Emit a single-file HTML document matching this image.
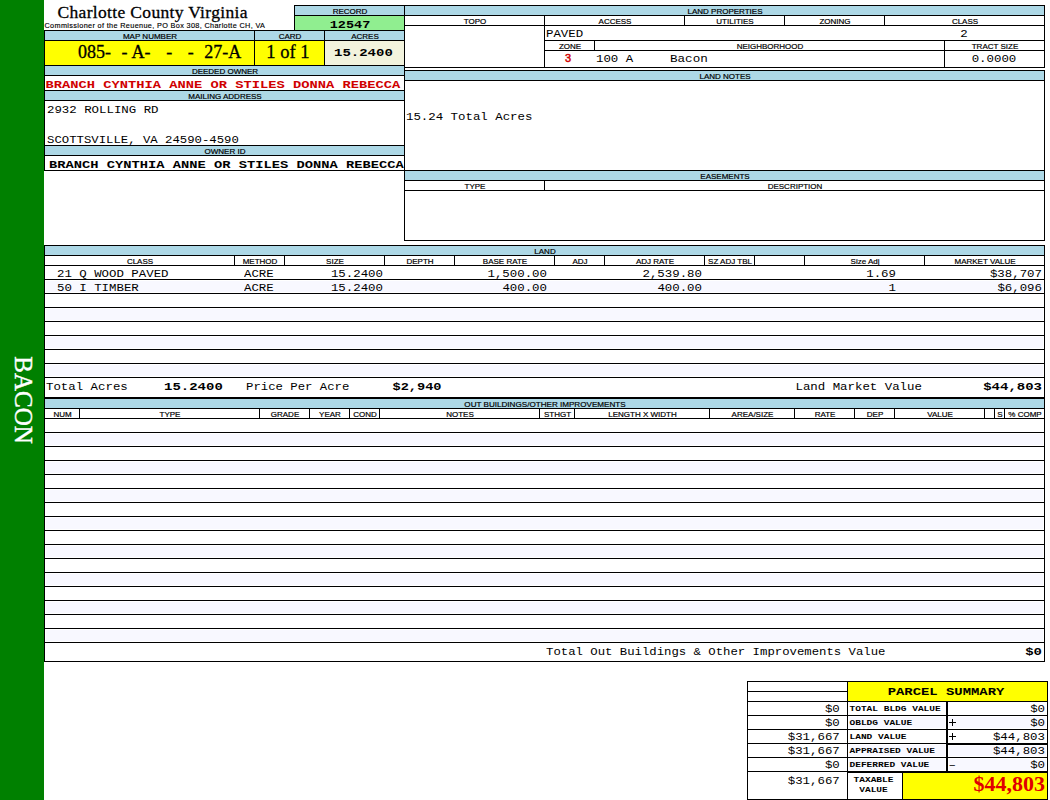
<!DOCTYPE html>
<html><head><meta charset="utf-8"><style>
html,body{margin:0;padding:0;background:#fff;}
body{width:1050px;height:800px;position:relative;overflow:hidden;}
.a{position:absolute;}
.t{position:absolute;white-space:pre;line-height:normal;color:#000;}
</style></head><body>
<div class="a" style="left:0px;top:0px;width:44px;height:800px;background:#008000"></div>
<div class="a" style="left:295px;top:6px;width:110px;height:9px;background:#add8e6"></div>
<div class="a" style="left:295px;top:16px;width:110px;height:14px;background:#90ee90"></div>
<div class="a" style="left:294px;top:5px;width:111px;height:1px;background:#000"></div>
<div class="a" style="left:294px;top:15px;width:111px;height:1px;background:#000"></div>
<div class="a" style="left:294px;top:5px;width:1px;height:26px;background:#000"></div>
<div class="a" style="left:45px;top:31px;width:359px;height:9px;background:#add8e6"></div>
<div class="a" style="left:45px;top:41px;width:209px;height:24px;background:#ffff00"></div>
<div class="a" style="left:255px;top:41px;width:69px;height:24px;background:#ffff00"></div>
<div class="a" style="left:325px;top:41px;width:79px;height:24px;background:#f2f3dd"></div>
<div class="a" style="left:45px;top:66px;width:359px;height:9px;background:#add8e6"></div>
<div class="a" style="left:45px;top:91px;width:359px;height:9px;background:#add8e6"></div>
<div class="a" style="left:45px;top:146px;width:359px;height:9px;background:#add8e6"></div>
<div class="a" style="left:44px;top:30px;width:361px;height:1px;background:#000"></div>
<div class="a" style="left:44px;top:40px;width:361px;height:1px;background:#000"></div>
<div class="a" style="left:44px;top:65px;width:361px;height:1px;background:#000"></div>
<div class="a" style="left:44px;top:75px;width:361px;height:1px;background:#000"></div>
<div class="a" style="left:44px;top:90px;width:361px;height:1px;background:#000"></div>
<div class="a" style="left:44px;top:100px;width:361px;height:1px;background:#000"></div>
<div class="a" style="left:44px;top:145px;width:361px;height:1px;background:#000"></div>
<div class="a" style="left:44px;top:155px;width:361px;height:1px;background:#000"></div>
<div class="a" style="left:44px;top:170px;width:361px;height:1px;background:#000"></div>
<div class="a" style="left:44px;top:30px;width:1px;height:141px;background:#000"></div>
<div class="a" style="left:404px;top:5px;width:1px;height:166px;background:#000"></div>
<div class="a" style="left:254px;top:30px;width:1px;height:36px;background:#000"></div>
<div class="a" style="left:324px;top:30px;width:1px;height:36px;background:#000"></div>
<div class="a" style="left:405px;top:6px;width:639px;height:9px;background:#add8e6"></div>
<div class="a" style="left:404px;top:5px;width:641px;height:1px;background:#000"></div>
<div class="a" style="left:404px;top:15px;width:641px;height:1px;background:#000"></div>
<div class="a" style="left:404px;top:25px;width:641px;height:1px;background:#000"></div>
<div class="a" style="left:404px;top:67px;width:641px;height:1px;background:#000"></div>
<div class="a" style="left:1044px;top:5px;width:1px;height:63px;background:#000"></div>
<div class="a" style="left:544px;top:15px;width:1px;height:11px;background:#000"></div>
<div class="a" style="left:684px;top:15px;width:1px;height:11px;background:#000"></div>
<div class="a" style="left:784px;top:15px;width:1px;height:11px;background:#000"></div>
<div class="a" style="left:884px;top:15px;width:1px;height:11px;background:#000"></div>
<div class="a" style="left:544px;top:25px;width:1px;height:43px;background:#000"></div>
<div class="a" style="left:544px;top:40px;width:501px;height:1px;background:#000"></div>
<div class="a" style="left:544px;top:50px;width:501px;height:1px;background:#000"></div>
<div class="a" style="left:594px;top:40px;width:1px;height:11px;background:#000"></div>
<div class="a" style="left:944px;top:40px;width:1px;height:28px;background:#000"></div>
<div class="a" style="left:405px;top:71px;width:639px;height:9px;background:#add8e6"></div>
<div class="a" style="left:404px;top:70px;width:641px;height:1px;background:#000"></div>
<div class="a" style="left:404px;top:80px;width:641px;height:1px;background:#000"></div>
<div class="a" style="left:1044px;top:70px;width:1px;height:101px;background:#000"></div>
<div class="a" style="left:405px;top:171px;width:639px;height:9px;background:#add8e6"></div>
<div class="a" style="left:404px;top:170px;width:641px;height:1px;background:#000"></div>
<div class="a" style="left:404px;top:180px;width:641px;height:1px;background:#000"></div>
<div class="a" style="left:404px;top:190px;width:641px;height:1px;background:#000"></div>
<div class="a" style="left:404px;top:240px;width:641px;height:1px;background:#000"></div>
<div class="a" style="left:404px;top:170px;width:1px;height:71px;background:#000"></div>
<div class="a" style="left:1044px;top:170px;width:1px;height:71px;background:#000"></div>
<div class="a" style="left:544px;top:180px;width:1px;height:11px;background:#000"></div>
<div class="a" style="left:45px;top:246px;width:999px;height:9px;background:#add8e6"></div>
<div class="a" style="left:46px;top:281px;width:997px;height:11px;background:#f8f8ff"></div>
<div class="a" style="left:46px;top:309px;width:997px;height:11px;background:#f8f8ff"></div>
<div class="a" style="left:46px;top:337px;width:997px;height:11px;background:#f8f8ff"></div>
<div class="a" style="left:46px;top:365px;width:997px;height:11px;background:#f8f8ff"></div>
<div class="a" style="left:44px;top:245px;width:1001px;height:1px;background:#000"></div>
<div class="a" style="left:44px;top:255px;width:1001px;height:1px;background:#000"></div>
<div class="a" style="left:44px;top:265px;width:1001px;height:1px;background:#000"></div>
<div class="a" style="left:44px;top:279px;width:1001px;height:1px;background:#000"></div>
<div class="a" style="left:44px;top:293px;width:1001px;height:1px;background:#000"></div>
<div class="a" style="left:44px;top:307px;width:1001px;height:1px;background:#000"></div>
<div class="a" style="left:44px;top:321px;width:1001px;height:1px;background:#000"></div>
<div class="a" style="left:44px;top:335px;width:1001px;height:1px;background:#000"></div>
<div class="a" style="left:44px;top:349px;width:1001px;height:1px;background:#000"></div>
<div class="a" style="left:44px;top:363px;width:1001px;height:1px;background:#000"></div>
<div class="a" style="left:44px;top:377px;width:1001px;height:1px;background:#000"></div>
<div class="a" style="left:44px;top:397px;width:1001px;height:1px;background:#000"></div>
<div class="a" style="left:44px;top:245px;width:1px;height:153px;background:#000"></div>
<div class="a" style="left:1044px;top:245px;width:1px;height:153px;background:#000"></div>
<div class="a" style="left:234px;top:255px;width:1px;height:11px;background:#000"></div>
<div class="a" style="left:284px;top:255px;width:1px;height:11px;background:#000"></div>
<div class="a" style="left:384px;top:255px;width:1px;height:11px;background:#000"></div>
<div class="a" style="left:454px;top:255px;width:1px;height:11px;background:#000"></div>
<div class="a" style="left:554px;top:255px;width:1px;height:11px;background:#000"></div>
<div class="a" style="left:604px;top:255px;width:1px;height:11px;background:#000"></div>
<div class="a" style="left:704px;top:255px;width:1px;height:11px;background:#000"></div>
<div class="a" style="left:754px;top:255px;width:1px;height:11px;background:#000"></div>
<div class="a" style="left:804px;top:255px;width:1px;height:11px;background:#000"></div>
<div class="a" style="left:924px;top:255px;width:1px;height:11px;background:#000"></div>
<div class="a" style="left:45px;top:399px;width:999px;height:9px;background:#add8e6"></div>
<div class="a" style="left:46px;top:434px;width:997px;height:11px;background:#f8f8ff"></div>
<div class="a" style="left:46px;top:462px;width:997px;height:11px;background:#f8f8ff"></div>
<div class="a" style="left:46px;top:490px;width:997px;height:11px;background:#f8f8ff"></div>
<div class="a" style="left:46px;top:518px;width:997px;height:11px;background:#f8f8ff"></div>
<div class="a" style="left:46px;top:546px;width:997px;height:11px;background:#f8f8ff"></div>
<div class="a" style="left:46px;top:574px;width:997px;height:11px;background:#f8f8ff"></div>
<div class="a" style="left:46px;top:602px;width:997px;height:11px;background:#f8f8ff"></div>
<div class="a" style="left:46px;top:630px;width:997px;height:11px;background:#f8f8ff"></div>
<div class="a" style="left:44px;top:398px;width:1001px;height:1px;background:#000"></div>
<div class="a" style="left:44px;top:408px;width:1001px;height:1px;background:#000"></div>
<div class="a" style="left:44px;top:418px;width:1001px;height:1px;background:#000"></div>
<div class="a" style="left:44px;top:432px;width:1001px;height:1px;background:#000"></div>
<div class="a" style="left:44px;top:446px;width:1001px;height:1px;background:#000"></div>
<div class="a" style="left:44px;top:460px;width:1001px;height:1px;background:#000"></div>
<div class="a" style="left:44px;top:474px;width:1001px;height:1px;background:#000"></div>
<div class="a" style="left:44px;top:488px;width:1001px;height:1px;background:#000"></div>
<div class="a" style="left:44px;top:502px;width:1001px;height:1px;background:#000"></div>
<div class="a" style="left:44px;top:516px;width:1001px;height:1px;background:#000"></div>
<div class="a" style="left:44px;top:530px;width:1001px;height:1px;background:#000"></div>
<div class="a" style="left:44px;top:544px;width:1001px;height:1px;background:#000"></div>
<div class="a" style="left:44px;top:558px;width:1001px;height:1px;background:#000"></div>
<div class="a" style="left:44px;top:572px;width:1001px;height:1px;background:#000"></div>
<div class="a" style="left:44px;top:586px;width:1001px;height:1px;background:#000"></div>
<div class="a" style="left:44px;top:600px;width:1001px;height:1px;background:#000"></div>
<div class="a" style="left:44px;top:614px;width:1001px;height:1px;background:#000"></div>
<div class="a" style="left:44px;top:628px;width:1001px;height:1px;background:#000"></div>
<div class="a" style="left:44px;top:642px;width:1001px;height:1px;background:#000"></div>
<div class="a" style="left:44px;top:661px;width:1001px;height:1px;background:#000"></div>
<div class="a" style="left:44px;top:398px;width:1px;height:264px;background:#000"></div>
<div class="a" style="left:1044px;top:398px;width:1px;height:264px;background:#000"></div>
<div class="a" style="left:79px;top:408px;width:1px;height:11px;background:#000"></div>
<div class="a" style="left:259px;top:408px;width:1px;height:11px;background:#000"></div>
<div class="a" style="left:309px;top:408px;width:1px;height:11px;background:#000"></div>
<div class="a" style="left:349px;top:408px;width:1px;height:11px;background:#000"></div>
<div class="a" style="left:379px;top:408px;width:1px;height:11px;background:#000"></div>
<div class="a" style="left:539px;top:408px;width:1px;height:11px;background:#000"></div>
<div class="a" style="left:574px;top:408px;width:1px;height:11px;background:#000"></div>
<div class="a" style="left:709px;top:408px;width:1px;height:11px;background:#000"></div>
<div class="a" style="left:794px;top:408px;width:1px;height:11px;background:#000"></div>
<div class="a" style="left:854px;top:408px;width:1px;height:11px;background:#000"></div>
<div class="a" style="left:894px;top:408px;width:1px;height:11px;background:#000"></div>
<div class="a" style="left:984px;top:408px;width:1px;height:11px;background:#000"></div>
<div class="a" style="left:994px;top:408px;width:1px;height:11px;background:#000"></div>
<div class="a" style="left:1004px;top:408px;width:1px;height:11px;background:#000"></div>
<div class="a" style="left:848px;top:682px;width:199px;height:19px;background:#ffff00"></div>
<div class="a" style="left:849px;top:717px;width:96px;height:11px;background:#f8f8ff"></div>
<div class="a" style="left:849px;top:745px;width:96px;height:11px;background:#f8f8ff"></div>
<div class="a" style="left:849px;top:759px;width:96px;height:11px;background:#f8f8ff"></div>
<div class="a" style="left:949px;top:717px;width:97px;height:11px;background:#f8f8ff"></div>
<div class="a" style="left:949px;top:746px;width:97px;height:10px;background:#f8f8ff"></div>
<div class="a" style="left:949px;top:759px;width:97px;height:11px;background:#f8f8ff"></div>
<div class="a" style="left:903px;top:773px;width:144px;height:26px;background:#ffff00"></div>
<div class="a" style="left:747px;top:681px;width:301px;height:1px;background:#000"></div>
<div class="a" style="left:747px;top:799px;width:301px;height:1px;background:#000"></div>
<div class="a" style="left:747px;top:681px;width:1px;height:119px;background:#000"></div>
<div class="a" style="left:1047px;top:681px;width:1px;height:119px;background:#000"></div>
<div class="a" style="left:747px;top:691px;width:101px;height:1px;background:#000"></div>
<div class="a" style="left:747px;top:701px;width:301px;height:1px;background:#000"></div>
<div class="a" style="left:747px;top:715px;width:301px;height:1px;background:#000"></div>
<div class="a" style="left:747px;top:729px;width:301px;height:1px;background:#000"></div>
<div class="a" style="left:747px;top:743px;width:301px;height:1px;background:#000"></div>
<div class="a" style="left:747px;top:757px;width:301px;height:1px;background:#000"></div>
<div class="a" style="left:747px;top:771px;width:301px;height:1px;background:#000"></div>
<div class="a" style="left:947px;top:744px;width:101px;height:1px;background:#000"></div>
<div class="a" style="left:848px;top:772px;width:200px;height:1px;background:#000"></div>
<div class="a" style="left:847px;top:681px;width:1px;height:119px;background:#000"></div>
<div class="a" style="left:946px;top:701px;width:2px;height:71px;background:#000"></div>
<div class="a" style="left:902px;top:771px;width:1px;height:29px;background:#000"></div>
<div class='t' style="left:-21px;top:385px;width:88px;height:30px;font-family:'Liberation Serif', serif;font-size:25px;line-height:30px;color:#fff;-webkit-text-stroke:0.4px #fff;transform:rotate(90deg);text-align:center">BACON</div>
<div class="t" style="left:57.5px;top:2.21px;font-family:'Liberation Serif', serif;font-size:17.5px;letter-spacing:0.33px;-webkit-text-stroke:0.3px #000;">Charlotte County Virginia</div>
<div class="t" style="left:44.5px;top:20.99px;font-family:'Liberation Sans', sans-serif;font-size:7.3px;letter-spacing:0.34px;transform:scale(1.0,0.95);transform-origin:0px 6.61px;-webkit-text-stroke:0.15px #000;">Commissioner of the Reuenue, PO Box 308, Charlotte CH, VA</div>
<div class="t" style="left:295px;top:6.76px;font-family:'Liberation Sans', sans-serif;font-size:8px;width:110px;text-align:center;-webkit-text-stroke:0.2px #000;">RECORD</div>
<div class="t" style="left:295px;top:16.75px;font-family:'Liberation Mono', monospace;font-size:13.5px;font-weight:bold;width:110px;text-align:center;transform:scale(1.0,0.8);transform-origin:55.0px 11.25px;">12547</div>
<div class="t" style="left:45px;top:31.76px;font-family:'Liberation Sans', sans-serif;font-size:8px;width:210px;text-align:center;-webkit-text-stroke:0.2px #000;">MAP NUMBER</div>
<div class="t" style="left:255px;top:31.76px;font-family:'Liberation Sans', sans-serif;font-size:8px;width:70px;text-align:center;-webkit-text-stroke:0.2px #000;">CARD</div>
<div class="t" style="left:325px;top:31.76px;font-family:'Liberation Sans', sans-serif;font-size:8px;width:80px;text-align:center;-webkit-text-stroke:0.2px #000;">ACRES</div>
<div class="t" style="left:78px;top:41.96px;font-family:'Liberation Serif', serif;font-size:18px;word-spacing:0.7px;-webkit-text-stroke:0.3px #000;">085-  - A-   -   -  27-A</div>
<div class="t" style="left:266.3px;top:41.52px;font-family:'Liberation Serif', serif;font-size:18.5px;-webkit-text-stroke:0.3px #000;">1 of 1</div>
<div class="t" style="left:334px;top:44.34px;font-family:'Liberation Mono', monospace;font-size:14px;font-weight:bold;transform:scale(1.0,0.8);transform-origin:0px 11.66px;">15.2400</div>
<div class="t" style="left:45px;top:66.76px;font-family:'Liberation Sans', sans-serif;font-size:8px;width:360px;text-align:center;-webkit-text-stroke:0.2px #000;">DEEDED OWNER</div>
<div class="t" style="left:45.5px;top:76.55px;font-family:'Liberation Mono', monospace;font-size:13.75px;font-weight:bold;color:#d00000;transform:scale(1.0,0.8);transform-origin:0px 11.45px;">BRANCH CYNTHIA ANNE OR STILES DONNA REBECCA</div>
<div class="t" style="left:45px;top:91.76px;font-family:'Liberation Sans', sans-serif;font-size:8px;width:360px;text-align:center;-webkit-text-stroke:0.2px #000;">MAILING ADDRESS</div>
<div class="t" style="left:47px;top:102.67px;font-family:'Liberation Mono', monospace;font-size:12.4px;transform:scale(1.0,0.9);transform-origin:0px 10.33px;">2932 ROLLING RD</div>
<div class="t" style="left:47px;top:132.75px;font-family:'Liberation Mono', monospace;font-size:12.3px;transform:scale(1.0,0.9);transform-origin:0px 10.25px;">SCOTTSVILLE, VA 24590-4590</div>
<div class="t" style="left:45px;top:146.76px;font-family:'Liberation Sans', sans-serif;font-size:8px;width:360px;text-align:center;-webkit-text-stroke:0.2px #000;">OWNER ID</div>
<div class="t" style="left:49px;top:156.55px;font-family:'Liberation Mono', monospace;font-size:13.75px;font-weight:bold;width:355px;text-align:left;transform:scale(1.0,0.8);transform-origin:0px 11.45px;overflow:hidden;">BRANCH CYNTHIA ANNE OR STILES DONNA REBECCA</div>
<div class="t" style="left:405px;top:6.76px;font-family:'Liberation Sans', sans-serif;font-size:8px;width:640px;text-align:center;-webkit-text-stroke:0.2px #000;">LAND PROPERTIES</div>
<div class="t" style="left:405px;top:16.76px;font-family:'Liberation Sans', sans-serif;font-size:8px;width:140px;text-align:center;-webkit-text-stroke:0.2px #000;">TOPO</div>
<div class="t" style="left:545px;top:16.76px;font-family:'Liberation Sans', sans-serif;font-size:8px;width:140px;text-align:center;-webkit-text-stroke:0.2px #000;">ACCESS</div>
<div class="t" style="left:685px;top:16.76px;font-family:'Liberation Sans', sans-serif;font-size:8px;width:100px;text-align:center;-webkit-text-stroke:0.2px #000;">UTILITIES</div>
<div class="t" style="left:785px;top:16.76px;font-family:'Liberation Sans', sans-serif;font-size:8px;width:100px;text-align:center;-webkit-text-stroke:0.2px #000;">ZONING</div>
<div class="t" style="left:885px;top:16.76px;font-family:'Liberation Sans', sans-serif;font-size:8px;width:160px;text-align:center;-webkit-text-stroke:0.2px #000;">CLASS</div>
<div class="t" style="left:546px;top:26.67px;font-family:'Liberation Mono', monospace;font-size:12.4px;transform:scale(1.0,0.9);transform-origin:0px 10.33px;">PAVED</div>
<div class="t" style="left:884px;top:27.17px;font-family:'Liberation Mono', monospace;font-size:12.4px;width:160px;text-align:center;transform:scale(1.0,0.9);transform-origin:80.0px 10.33px;">2</div>
<div class="t" style="left:545px;top:41.76px;font-family:'Liberation Sans', sans-serif;font-size:8px;width:50px;text-align:center;-webkit-text-stroke:0.2px #000;">ZONE</div>
<div class="t" style="left:595px;top:41.76px;font-family:'Liberation Sans', sans-serif;font-size:8px;width:350px;text-align:center;-webkit-text-stroke:0.2px #000;">NEIGHBORHOOD</div>
<div class="t" style="left:945px;top:41.76px;font-family:'Liberation Sans', sans-serif;font-size:8px;width:100px;text-align:center;-webkit-text-stroke:0.2px #000;">TRACT SIZE</div>
<div class="t" style="left:543px;top:52.05px;font-family:'Liberation Sans', sans-serif;font-size:11px;color:#d00000;width:50px;text-align:center;-webkit-text-stroke:0.5px #d00000;">3</div>
<div class="t" style="left:596px;top:51.67px;font-family:'Liberation Mono', monospace;font-size:12.4px;transform:scale(1.0,0.9);transform-origin:0px 10.33px;">100 A</div>
<div class="t" style="left:670px;top:51.50px;font-family:'Liberation Mono', monospace;font-size:12.6px;transform:scale(1.0,0.9);transform-origin:0px 10.50px;">Bacon</div>
<div class="t" style="left:944px;top:51.67px;font-family:'Liberation Mono', monospace;font-size:12.4px;width:100px;text-align:center;transform:scale(1.0,0.9);transform-origin:50.0px 10.33px;">0.0000</div>
<div class="t" style="left:405px;top:71.76px;font-family:'Liberation Sans', sans-serif;font-size:8px;width:640px;text-align:center;-webkit-text-stroke:0.2px #000;">LAND NOTES</div>
<div class="t" style="left:406px;top:109.67px;font-family:'Liberation Mono', monospace;font-size:12.4px;transform:scale(1.0,0.9);transform-origin:0px 10.33px;">15.24 Total Acres</div>
<div class="t" style="left:405px;top:171.76px;font-family:'Liberation Sans', sans-serif;font-size:8px;width:640px;text-align:center;-webkit-text-stroke:0.2px #000;">EASEMENTS</div>
<div class="t" style="left:405px;top:181.76px;font-family:'Liberation Sans', sans-serif;font-size:8px;width:140px;text-align:center;-webkit-text-stroke:0.2px #000;">TYPE</div>
<div class="t" style="left:545px;top:181.76px;font-family:'Liberation Sans', sans-serif;font-size:8px;width:500px;text-align:center;-webkit-text-stroke:0.2px #000;">DESCRIPTION</div>
<div class="t" style="left:45px;top:246.76px;font-family:'Liberation Sans', sans-serif;font-size:8px;width:1000px;text-align:center;-webkit-text-stroke:0.2px #000;">LAND</div>
<div class="t" style="left:45px;top:256.76px;font-family:'Liberation Sans', sans-serif;font-size:8px;width:190px;text-align:center;-webkit-text-stroke:0.2px #000;">CLASS</div>
<div class="t" style="left:235px;top:256.76px;font-family:'Liberation Sans', sans-serif;font-size:8px;width:50px;text-align:center;-webkit-text-stroke:0.2px #000;">METHOD</div>
<div class="t" style="left:285px;top:256.76px;font-family:'Liberation Sans', sans-serif;font-size:8px;width:100px;text-align:center;-webkit-text-stroke:0.2px #000;">SIZE</div>
<div class="t" style="left:385px;top:256.76px;font-family:'Liberation Sans', sans-serif;font-size:8px;width:70px;text-align:center;-webkit-text-stroke:0.2px #000;">DEPTH</div>
<div class="t" style="left:455px;top:256.76px;font-family:'Liberation Sans', sans-serif;font-size:8px;width:100px;text-align:center;-webkit-text-stroke:0.2px #000;">BASE RATE</div>
<div class="t" style="left:555px;top:256.76px;font-family:'Liberation Sans', sans-serif;font-size:8px;width:50px;text-align:center;-webkit-text-stroke:0.2px #000;">ADJ</div>
<div class="t" style="left:605px;top:256.76px;font-family:'Liberation Sans', sans-serif;font-size:8px;width:100px;text-align:center;-webkit-text-stroke:0.2px #000;">ADJ RATE</div>
<div class="t" style="left:705px;top:256.76px;font-family:'Liberation Sans', sans-serif;font-size:8px;width:50px;text-align:center;-webkit-text-stroke:0.2px #000;">SZ ADJ TBL</div>
<div class="t" style="left:805px;top:256.76px;font-family:'Liberation Sans', sans-serif;font-size:8px;width:120px;text-align:center;-webkit-text-stroke:0.2px #000;">Size Adj</div>
<div class="t" style="left:925px;top:256.76px;font-family:'Liberation Sans', sans-serif;font-size:8px;width:120px;text-align:center;-webkit-text-stroke:0.2px #000;">MARKET VALUE</div>
<div class="t" style="left:57px;top:266.67px;font-family:'Liberation Mono', monospace;font-size:12.4px;transform:scale(1.0,0.9);transform-origin:0px 10.33px;">21 Q WOOD PAVED</div>
<div class="t" style="left:244px;top:266.67px;font-family:'Liberation Mono', monospace;font-size:12.4px;transform:scale(1.0,0.9);transform-origin:0px 10.33px;">ACRE</div>
<div class="t" style="left:285px;top:266.67px;font-family:'Liberation Mono', monospace;font-size:12.4px;width:98px;text-align:right;transform:scale(1.0,0.9);transform-origin:98px 10.33px;">15.2400</div>
<div class="t" style="left:455px;top:266.67px;font-family:'Liberation Mono', monospace;font-size:12.4px;width:92px;text-align:right;transform:scale(1.0,0.9);transform-origin:92px 10.33px;">1,500.00</div>
<div class="t" style="left:605px;top:266.67px;font-family:'Liberation Mono', monospace;font-size:12.4px;width:97px;text-align:right;transform:scale(1.0,0.9);transform-origin:97px 10.33px;">2,539.80</div>
<div class="t" style="left:805px;top:266.67px;font-family:'Liberation Mono', monospace;font-size:12.4px;width:91px;text-align:right;transform:scale(1.0,0.9);transform-origin:91px 10.33px;">1.69</div>
<div class="t" style="left:925px;top:266.67px;font-family:'Liberation Mono', monospace;font-size:12.4px;width:117px;text-align:right;transform:scale(1.0,0.9);transform-origin:117px 10.33px;">$38,707</div>
<div class="t" style="left:57px;top:280.67px;font-family:'Liberation Mono', monospace;font-size:12.4px;transform:scale(1.0,0.9);transform-origin:0px 10.33px;">50 I TIMBER</div>
<div class="t" style="left:244px;top:280.67px;font-family:'Liberation Mono', monospace;font-size:12.4px;transform:scale(1.0,0.9);transform-origin:0px 10.33px;">ACRE</div>
<div class="t" style="left:285px;top:280.67px;font-family:'Liberation Mono', monospace;font-size:12.4px;width:98px;text-align:right;transform:scale(1.0,0.9);transform-origin:98px 10.33px;">15.2400</div>
<div class="t" style="left:455px;top:280.67px;font-family:'Liberation Mono', monospace;font-size:12.4px;width:92px;text-align:right;transform:scale(1.0,0.9);transform-origin:92px 10.33px;">400.00</div>
<div class="t" style="left:605px;top:280.67px;font-family:'Liberation Mono', monospace;font-size:12.4px;width:97px;text-align:right;transform:scale(1.0,0.9);transform-origin:97px 10.33px;">400.00</div>
<div class="t" style="left:805px;top:280.67px;font-family:'Liberation Mono', monospace;font-size:12.4px;width:91px;text-align:right;transform:scale(1.0,0.9);transform-origin:91px 10.33px;">1</div>
<div class="t" style="left:925px;top:280.67px;font-family:'Liberation Mono', monospace;font-size:12.4px;width:117px;text-align:right;transform:scale(1.0,0.9);transform-origin:117px 10.33px;">$6,096</div>
<div class="t" style="left:46px;top:379.67px;font-family:'Liberation Mono', monospace;font-size:12.4px;transform:scale(1.0,0.9);transform-origin:0px 10.33px;">Total Acres</div>
<div class="t" style="left:164px;top:378.34px;font-family:'Liberation Mono', monospace;font-size:14px;font-weight:bold;transform:scale(1.0,0.8);transform-origin:0px 11.66px;">15.2400</div>
<div class="t" style="left:246px;top:379.75px;font-family:'Liberation Mono', monospace;font-size:12.3px;transform:scale(1.0,0.9);transform-origin:0px 10.25px;">Price Per Acre</div>
<div class="t" style="left:392.5px;top:378.67px;font-family:'Liberation Mono', monospace;font-size:13.6px;font-weight:bold;transform:scale(1.0,0.8);transform-origin:0px 11.33px;">$2,940</div>
<div class="t" style="left:795.5px;top:379.67px;font-family:'Liberation Mono', monospace;font-size:12.4px;transform:scale(1.0,0.9);transform-origin:0px 10.33px;">Land Market Value</div>
<div class="t" style="left:925px;top:378.34px;font-family:'Liberation Mono', monospace;font-size:14px;font-weight:bold;width:117px;text-align:right;transform:scale(1.0,0.8);transform-origin:117px 11.66px;">$44,803</div>
<div class="t" style="left:45px;top:399.67px;font-family:'Liberation Sans', sans-serif;font-size:8.1px;width:1000px;text-align:center;-webkit-text-stroke:0.2px #000;">OUT BUILDINGS/OTHER IMPROVEMENTS</div>
<div class="t" style="left:45px;top:409.76px;font-family:'Liberation Sans', sans-serif;font-size:8px;width:35px;text-align:center;-webkit-text-stroke:0.2px #000;">NUM</div>
<div class="t" style="left:80px;top:409.76px;font-family:'Liberation Sans', sans-serif;font-size:8px;width:180px;text-align:center;-webkit-text-stroke:0.2px #000;">TYPE</div>
<div class="t" style="left:260px;top:409.76px;font-family:'Liberation Sans', sans-serif;font-size:8px;width:50px;text-align:center;-webkit-text-stroke:0.2px #000;">GRADE</div>
<div class="t" style="left:310px;top:409.76px;font-family:'Liberation Sans', sans-serif;font-size:8px;width:40px;text-align:center;-webkit-text-stroke:0.2px #000;">YEAR</div>
<div class="t" style="left:350px;top:409.76px;font-family:'Liberation Sans', sans-serif;font-size:8px;width:30px;text-align:center;-webkit-text-stroke:0.2px #000;">COND</div>
<div class="t" style="left:380px;top:409.76px;font-family:'Liberation Sans', sans-serif;font-size:8px;width:160px;text-align:center;-webkit-text-stroke:0.2px #000;">NOTES</div>
<div class="t" style="left:540px;top:409.76px;font-family:'Liberation Sans', sans-serif;font-size:8px;width:35px;text-align:center;-webkit-text-stroke:0.2px #000;">STHGT</div>
<div class="t" style="left:575px;top:409.76px;font-family:'Liberation Sans', sans-serif;font-size:8px;width:135px;text-align:center;-webkit-text-stroke:0.2px #000;">LENGTH X WIDTH</div>
<div class="t" style="left:710px;top:409.76px;font-family:'Liberation Sans', sans-serif;font-size:8px;width:85px;text-align:center;-webkit-text-stroke:0.2px #000;">AREA/SIZE</div>
<div class="t" style="left:795px;top:409.76px;font-family:'Liberation Sans', sans-serif;font-size:8px;width:60px;text-align:center;-webkit-text-stroke:0.2px #000;">RATE</div>
<div class="t" style="left:855px;top:409.76px;font-family:'Liberation Sans', sans-serif;font-size:8px;width:40px;text-align:center;-webkit-text-stroke:0.2px #000;">DEP</div>
<div class="t" style="left:895px;top:409.76px;font-family:'Liberation Sans', sans-serif;font-size:8px;width:90px;text-align:center;-webkit-text-stroke:0.2px #000;">VALUE</div>
<div class="t" style="left:995px;top:409.76px;font-family:'Liberation Sans', sans-serif;font-size:8px;width:10px;text-align:center;-webkit-text-stroke:0.2px #000;">S</div>
<div class="t" style="left:1005px;top:409.76px;font-family:'Liberation Sans', sans-serif;font-size:8px;width:40px;text-align:center;-webkit-text-stroke:0.2px #000;">% COMP</div>
<div class="t" style="left:546px;top:644.75px;font-family:'Liberation Mono', monospace;font-size:12.3px;transform:scale(1.0,0.9);transform-origin:0px 10.25px;">Total Out Buildings & Other Improvements Value</div>
<div class="t" style="left:925px;top:643.34px;font-family:'Liberation Mono', monospace;font-size:14px;font-weight:bold;width:117px;text-align:right;transform:scale(1.0,0.8);transform-origin:117px 11.66px;">$0</div>
<div class="t" style="left:846.5px;top:683.42px;font-family:'Liberation Mono', monospace;font-size:13.9px;font-weight:bold;width:199px;text-align:center;transform:scale(1.0,0.8);transform-origin:99.5px 11.58px;">PARCEL SUMMARY</div>
<div class="t" style="left:748.8px;top:702.17px;font-family:'Liberation Mono', monospace;font-size:12.4px;width:91px;text-align:right;transform:scale(1.0,0.9);transform-origin:91px 10.33px;">$0</div>
<div class="t" style="left:849.5px;top:702.59px;font-family:'Liberation Mono', monospace;font-size:9.5px;font-weight:bold;transform:scale(1.0,0.8);transform-origin:0px 7.91px;">TOTAL BLDG VALUE</div>
<div class="t" style="left:948px;top:702.17px;font-family:'Liberation Mono', monospace;font-size:12.4px;width:97px;text-align:right;transform:scale(1.0,0.9);transform-origin:97px 10.33px;">$0</div>
<div class="t" style="left:748.8px;top:716.17px;font-family:'Liberation Mono', monospace;font-size:12.4px;width:91px;text-align:right;transform:scale(1.0,0.9);transform-origin:91px 10.33px;">$0</div>
<div class="t" style="left:849.5px;top:716.59px;font-family:'Liberation Mono', monospace;font-size:9.5px;font-weight:bold;transform:scale(1.0,0.8);transform-origin:0px 7.91px;">OBLDG VALUE</div>
<div class="a" style="left:949px;top:722px;width:7px;height:1px;background:#000"></div>
<div class="a" style="left:952px;top:719px;width:1px;height:7px;background:#000"></div>
<div class="t" style="left:948px;top:716.17px;font-family:'Liberation Mono', monospace;font-size:12.4px;width:97px;text-align:right;transform:scale(1.0,0.9);transform-origin:97px 10.33px;">$0</div>
<div class="t" style="left:748.8px;top:730.17px;font-family:'Liberation Mono', monospace;font-size:12.4px;width:91px;text-align:right;transform:scale(1.0,0.9);transform-origin:91px 10.33px;">$31,667</div>
<div class="t" style="left:849.5px;top:730.59px;font-family:'Liberation Mono', monospace;font-size:9.5px;font-weight:bold;transform:scale(1.0,0.8);transform-origin:0px 7.91px;">LAND VALUE</div>
<div class="a" style="left:949px;top:736px;width:7px;height:1px;background:#000"></div>
<div class="a" style="left:952px;top:733px;width:1px;height:7px;background:#000"></div>
<div class="t" style="left:948px;top:730.17px;font-family:'Liberation Mono', monospace;font-size:12.4px;width:97px;text-align:right;transform:scale(1.0,0.9);transform-origin:97px 10.33px;">$44,803</div>
<div class="t" style="left:748.8px;top:744.17px;font-family:'Liberation Mono', monospace;font-size:12.4px;width:91px;text-align:right;transform:scale(1.0,0.9);transform-origin:91px 10.33px;">$31,667</div>
<div class="t" style="left:849.5px;top:744.59px;font-family:'Liberation Mono', monospace;font-size:9.5px;font-weight:bold;transform:scale(1.0,0.8);transform-origin:0px 7.91px;">APPRAISED VALUE</div>
<div class="t" style="left:948px;top:744.17px;font-family:'Liberation Mono', monospace;font-size:12.4px;width:97px;text-align:right;transform:scale(1.0,0.9);transform-origin:97px 10.33px;">$44,803</div>
<div class="t" style="left:748.8px;top:758.17px;font-family:'Liberation Mono', monospace;font-size:12.4px;width:91px;text-align:right;transform:scale(1.0,0.9);transform-origin:91px 10.33px;">$0</div>
<div class="t" style="left:849.5px;top:758.59px;font-family:'Liberation Mono', monospace;font-size:9.5px;font-weight:bold;transform:scale(1.0,0.8);transform-origin:0px 7.91px;">DEFERRED VALUE</div>
<div class="t" style="left:948.5px;top:758.17px;font-family:'Liberation Mono', monospace;font-size:12.4px;transform:scale(1.0,0.9);transform-origin:0px 10.33px;">–</div>
<div class="t" style="left:948px;top:758.17px;font-family:'Liberation Mono', monospace;font-size:12.4px;width:97px;text-align:right;transform:scale(1.0,0.9);transform-origin:97px 10.33px;">$0</div>
<div class="t" style="left:748.8px;top:774.17px;font-family:'Liberation Mono', monospace;font-size:12.4px;width:91px;text-align:right;transform:scale(1.0,0.9);transform-origin:91px 10.33px;">$31,667</div>
<div class="t" style="left:846.5px;top:774.09px;font-family:'Liberation Mono', monospace;font-size:9.5px;font-weight:bold;width:54px;text-align:center;transform:scale(1.0,0.8);transform-origin:27.0px 7.91px;">TAXABLE</div>
<div class="t" style="left:846.5px;top:784.09px;font-family:'Liberation Mono', monospace;font-size:9.5px;font-weight:bold;width:54px;text-align:center;transform:scale(1.0,0.8);transform-origin:27.0px 7.91px;">VALUE</div>
<div class="t" style="left:903px;top:770.90px;font-family:'Liberation Serif', serif;font-size:22px;font-weight:bold;color:#e00000;width:142px;text-align:right;">$44,803</div>
</body></html>
